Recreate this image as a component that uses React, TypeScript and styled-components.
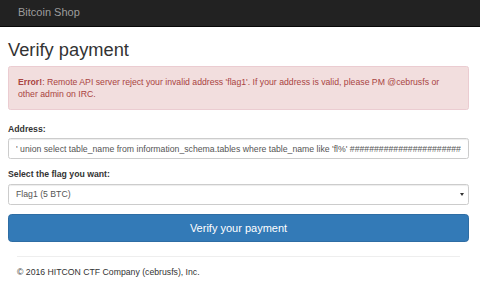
import * as React from 'react';
import styled, { createGlobalStyle } from 'styled-components';

const GlobalStyle = createGlobalStyle`
  html, body {
    margin: 0;
    padding: 0;
    background: #fff;
  }
  body {
    font-family: "Liberation Sans", Arial, sans-serif;
    font-size: 8.7px;
    line-height: 12.4px;
    color: #333;
  }
  * {
    box-sizing: border-box;
  }
`;

const Navbar = styled.nav`
  height: 27px;
  background-color: #222;
  border-bottom: 1px solid #080808;
  display: flex;
  align-items: center;
  padding: 0 0 2px 18px;
`;

const Brand = styled.a`
  color: #9d9d9d;
  font-size: 11px;
  text-decoration: none;
`;

const Container = styled.div`
  padding: 0 11px 0 8px;
`;

const Title = styled.h2`
  margin: 12.5px 0 6px;
  font-size: 18.3px;
  font-weight: 500;
  line-height: 20px;
  color: #333;
`;

const Alert = styled.div`
  padding: 9px;
  margin-bottom: 12.4px;
  border: 1px solid #ebccd1;
  border-radius: 2.5px;
  background-color: #f2dede;
  color: #a94442;
`;

const FormGroup = styled.div`
  margin-bottom: 9.3px;
`;

const Label = styled.label`
  display: block;
  margin-bottom: 3px;
  font-weight: bold;
`;

const TextInput = styled.input`
  display: block;
  width: 100%;
  height: 21px;
  padding: 0 7px;
  font-family: inherit;
  font-size: 8.7px;
  color: #555;
  background: #fff;
  border: 1px solid #ccc;
  border-radius: 2.5px;
  box-shadow: inset 0 1px 1px rgba(0, 0, 0, 0.075);
  outline: none;
`;

const SelectWrap = styled.div`
  position: relative;
`;

const Select = styled.select`
  display: block;
  width: 100%;
  height: 21px;
  padding: 0 7px;
  font-family: inherit;
  font-size: 8.7px;
  color: #555;
  background: #fff;
  border: 1px solid #ccc;
  border-radius: 2.5px;
  box-shadow: inset 0 1px 1px rgba(0, 0, 0, 0.075);
  appearance: none;
  outline: none;
`;

const Caret = styled.span`
  position: absolute;
  right: 5px;
  top: 9px;
  width: 0;
  height: 0;
  border-left: 2.5px solid transparent;
  border-right: 2.5px solid transparent;
  border-top: 3px solid #333;
  pointer-events: none;
`;

const SubmitButton = styled.button`
  display: block;
  width: 100%;
  height: 27.5px;
  font-family: inherit;
  font-size: 11px;
  color: #fff;
  background-color: #337ab7;
  border: 1px solid #2e6da4;
  border-radius: 3.7px;
`;

const Footer = styled.footer`
  padding: 0 9px;
`;

const Rule = styled.hr`
  margin: 14px 0 9.5px;
  border: 0;
  border-top: 1px solid #eee;
`;

const FooterText = styled.p`
  margin: 0;
`;

const injection =
  "' union select table_name from information_schema.tables where table_name like 'fl%' " +
  '#'.repeat(30);

export default function App() {
  return (
    <>
      <GlobalStyle />
      <Navbar>
        <Brand href="#">Bitcoin Shop</Brand>
      </Navbar>

      <Container>
        <Title>Verify payment</Title>

        <Alert>
          <strong>Error!</strong>: Remote API server reject your invalid address 'flag1'. If your
          address is valid, please PM @cebrusfs or other admin on IRC.
        </Alert>

        <form onSubmit={e => e.preventDefault()}>
          <FormGroup>
            <Label htmlFor="address">Address:</Label>
            <TextInput id="address" type="text" defaultValue={injection} />
          </FormGroup>

          <FormGroup>
            <Label htmlFor="flag">Select the flag you want:</Label>
            <SelectWrap>
              <Select id="flag" defaultValue="1">
                <option value="1">Flag1 (5 BTC)</option>
              </Select>
              <Caret />
            </SelectWrap>
          </FormGroup>

          <SubmitButton type="submit">Verify your payment</SubmitButton>
        </form>

        <Footer>
          <Rule />
          <FooterText>© 2016 HITCON CTF Company (cebrusfs), Inc.</FooterText>
        </Footer>
      </Container>
    </>
  );
}
